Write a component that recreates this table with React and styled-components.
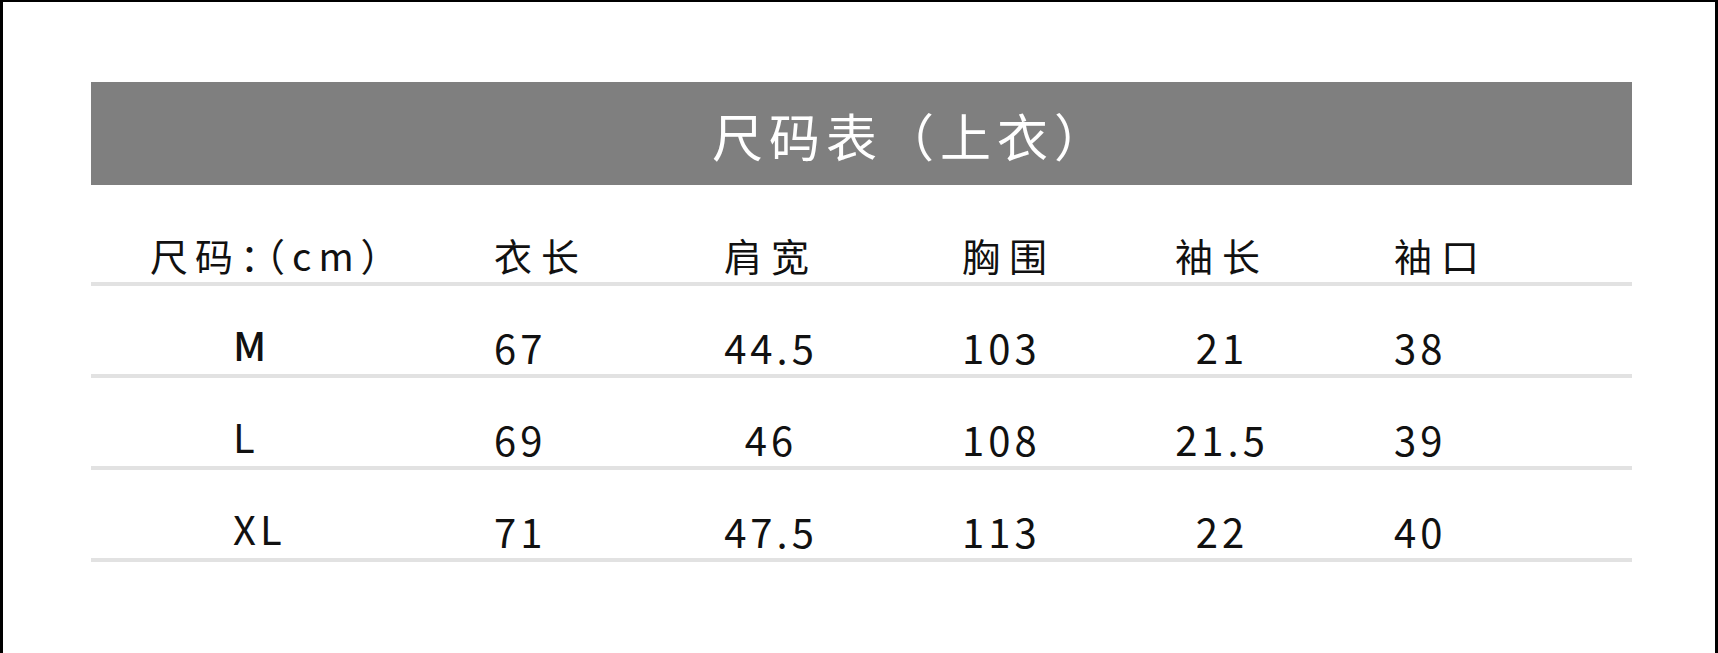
import React from "react";
import styled, { createGlobalStyle } from "styled-components";

const Global = createGlobalStyle`
  html, body { margin: 0; padding: 0; background: #fff; }
  body { font-family: "Noto Sans CJK SC", "Noto Sans", sans-serif; color: #111; }
`;

const Frame = styled.div`
  box-sizing: border-box;
  width: 1718px;
  height: 653px;
  border-top: 2px solid #000;
  border-left: 3px solid #000;
  border-right: 3px solid #000;
  background: #fff;
  padding: 80px 83px 0 88px;
  overflow: hidden;
`;

const TitleBar = styled.div`
  box-sizing: border-box;
  height: 103px;
  background: #7f7f7f;
  display: flex;
  align-items: center;
  justify-content: center;
  padding: 4px 0 0 100px;
`;

const Title = styled.h1`
  margin: 0;
  font-size: 51px;
  font-weight: 400;
  line-height: 1;
  letter-spacing: 6px;
  color: #fff;
`;

const Table = styled.div`
  display: flex;
  flex-direction: column;
`;

const Row = styled.div`
  box-sizing: border-box;
  display: grid;
  grid-template-columns: 403px 182px 190px 256px 200px 310px;
  align-items: end;
  height: ${(p) => p.$height}px;
  border-bottom: 4px solid #e2e2e2;
`;

const HeadCell = styled.div`
  text-align: ${(p) => p.$align};
  padding-left: ${(p) => p.$pad}px;
  padding-bottom: 8px;
  font-size: 38px;
  line-height: 1;
  letter-spacing: ${(p) => (p.$half ? 7 : 9)}px;
  white-space: nowrap;
  font-feature-settings: ${(p) => (p.$half ? '"halt"' : "normal")};
`;

const Cell = styled.div`
  text-align: ${(p) => p.$align};
  padding-left: ${(p) => p.$pad}px;
  padding-bottom: ${(p) => (p.$size ? 10 : 7)}px;
  font-size: 40px;
  line-height: 1;
  letter-spacing: 4px;
  font-weight: ${(p) => (p.$strong ? 500 : 400)};
  white-space: nowrap;
`;

const columns = [
  { align: "left", pad: 142, headPad: 59 },
  { align: "left", pad: 0, headPad: 0 },
  { align: "center", pad: 0, headPad: 0 },
  { align: "left", pad: 96, headPad: 96 },
  { align: "center", pad: 0, headPad: 0 },
  { align: "left", pad: 72, headPad: 72 },
];

const headers = ["尺码：（cm）", "衣长", "肩宽", "胸围", "袖长", "袖口"];

const rows = [
  ["M", "67", "44.5", "103", "21", "38"],
  ["L", "69", "46", "108", "21.5", "39"],
  ["XL", "71", "47.5", "113", "22", "40"],
];

export default function App() {
  return (
    <>
      <Global />
      <Frame>
        <TitleBar>
          <Title>尺码表（上衣）</Title>
        </TitleBar>
        <Table>
          <Row $height={101}>
            {headers.map((h, i) => (
              <HeadCell
                key={h}
                $align={columns[i].align}
                $pad={columns[i].headPad}
                $half={i === 0}
              >
                {h}
              </HeadCell>
            ))}
          </Row>
          {rows.map((r) => (
            <Row key={r[0]} $height={92}>
              {r.map((v, i) => (
                <Cell
                  key={i}
                  $align={columns[i].align}
                  $pad={columns[i].pad}
                  $size={i === 0}
                  $strong={v === "M"}
                >
                  {v}
                </Cell>
              ))}
            </Row>
          ))}
        </Table>
      </Frame>
    </>
  );
}
